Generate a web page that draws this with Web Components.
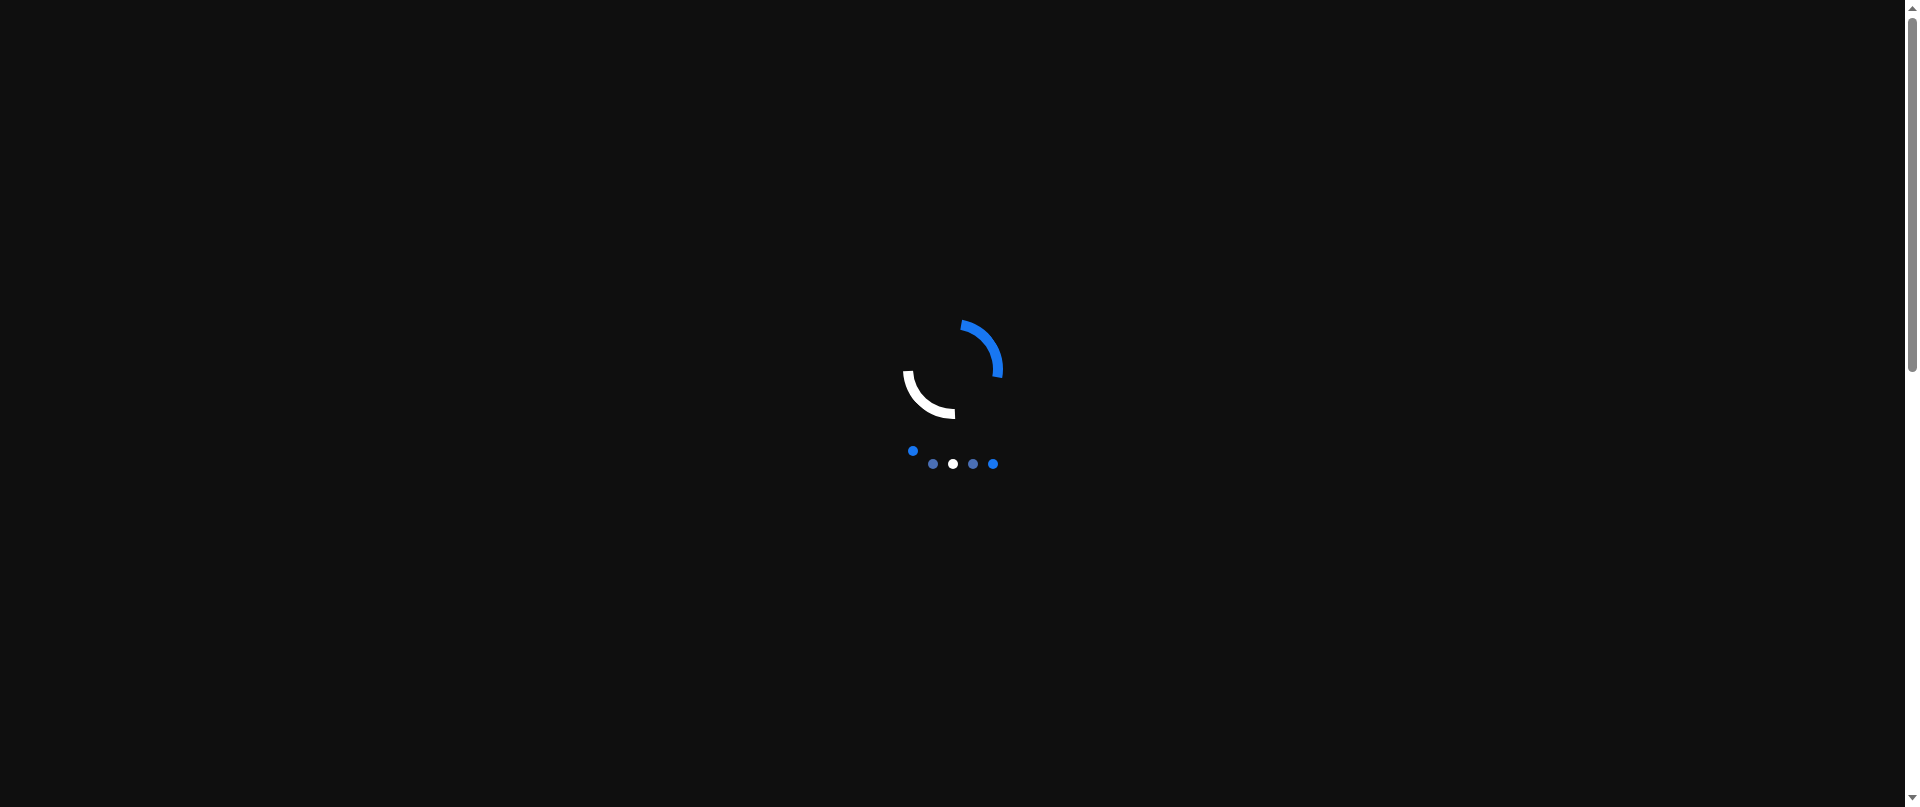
<!DOCTYPE html>
<html>
<head>
<meta charset="utf-8">
<title>Loading</title>
<style>
  html, body { margin: 0; height: 100%; background: #0f0f0f; overflow: hidden; }
</style>
</head>
<body>
<app-shell>
  <loading-screen></loading-screen>
</app-shell>
<script>
class AppShell extends HTMLElement {
  constructor() {
    super();
    this.attachShadow({ mode: 'open' });
    this.shadowRoot.innerHTML = `
      <style>
        :host { display: flex; height: 100vh; background: #0f0f0f; }
        main { flex: 1; min-width: 0; }
      </style>
      <main><slot></slot></main>
      <fake-scrollbar></fake-scrollbar>
    `;
  }
}

class FakeScrollbar extends HTMLElement {
  constructor() {
    super();
    this.attachShadow({ mode: 'open' });
    this.shadowRoot.innerHTML = `
      <style>
        :host { display: flex; flex-direction: column; width: 15px; height: 100%; background: #fff; }
        .arrow { height: 15px; display: block; }
        .track { flex: 1; min-height: 0; padding: 2.5px 3px 0; box-sizing: border-box; }
        .thumb { height: 354px; background: #858585; border-radius: 5px; }
      </style>
      <svg class="arrow" viewBox="0 0 15 15"><path d="M3 11h9L7.500 6z" fill="#6f6f6f"/></svg>
      <div class="track"><div class="thumb"></div></div>
      <svg class="arrow" viewBox="0 0 15 15"><path d="M3 3h9L7.500 8.500z" fill="#6f6f6f"/></svg>
    `;
  }
}

class LoadingScreen extends HTMLElement {
  constructor() {
    super();
    this.attachShadow({ mode: 'open' });
    this.shadowRoot.innerHTML = `
      <style>
        :host { display: flex; flex-direction: column; align-items: center; height: 100%; padding-top: 319px; box-sizing: border-box; }
        .dots { display: flex; gap: 10px; margin-top: 40px; height: 10px; }
      </style>
      <spin-ring></spin-ring>
      <div class="dots">
        <load-dot style="--c:#1877f2; --lift:-13px"></load-dot>
        <load-dot style="--c:#4a6fb5"></load-dot>
        <load-dot style="--c:#fff"></load-dot>
        <load-dot style="--c:#4a6fb5"></load-dot>
        <load-dot style="--c:#1877f2"></load-dot>
      </div>
    `;
  }
}

class SpinRing extends HTMLElement {
  constructor() {
    super();
    this.attachShadow({ mode: 'open' });
    this.shadowRoot.innerHTML = `
      <style>
        :host { display: grid; width: 100px; height: 100px; }
        .ring { grid-area: 1 / 1; box-sizing: border-box; border: 10px solid transparent; border-radius: 50%; }
        .blue { border-top-color: #1877f2; transform: rotate(55.5deg); }
        .white { border-top-color: #fff; transform: rotate(222.5deg); }
      </style>
      <div class="ring blue"></div>
      <div class="ring white"></div>
    `;
  }
}

class LoadDot extends HTMLElement {
  constructor() {
    super();
    this.attachShadow({ mode: 'open' });
    this.shadowRoot.innerHTML = `
      <style>
        :host { display: block; width: 10px; height: 10px; border-radius: 50%; background: var(--c); transform: translateY(var(--lift, 0)); }
      </style>
    `;
  }
}

customElements.define('fake-scrollbar', FakeScrollbar);
customElements.define('spin-ring', SpinRing);
customElements.define('load-dot', LoadDot);
customElements.define('loading-screen', LoadingScreen);
customElements.define('app-shell', AppShell);
</script>
</body>
</html>
